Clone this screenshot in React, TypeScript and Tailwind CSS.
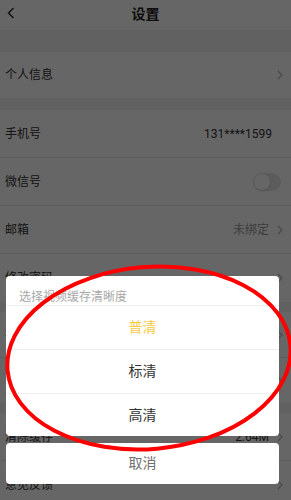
import { ReactNode } from "react";

const font = { fontFamily: '"Roboto", "Noto Sans CJK SC", sans-serif' };

function Chevron() {
    return (
        <svg width="6" height="10" viewBox="0 0 6 10" className="text-[#b5b5b5]">
            <path d="M1 1l4 4-4 4" fill="none" stroke="currentColor" strokeWidth="1.1" />
        </svg>
    );
}

function Row({ label, right, h = "h-[48px]", border = true }: { label: string; right?: ReactNode; h?: string; border?: boolean }) {
    return (
        <div className={`${h} bg-white flex items-center justify-between pl-[5px] pr-[8px] ${border ? "border-b border-[#ececec]" : ""}`}>
            <span className="text-[12px] text-[#333]">{label}</span>
            <div className="flex items-center gap-[8px]">{right}</div>
        </div>
    );
}

function App() {
    return (
        <div className="relative w-[291px] h-[500px] overflow-hidden bg-[#f2f3f5]" style={font}>
            {/* settings page */}
            <div className="h-[30px] bg-white flex items-center relative">
                <svg width="8" height="12" viewBox="0 0 8 12" className="absolute left-[7px] top-[7px]">
                    <path d="M6.5 1L1.5 6l5 5" fill="none" stroke="#222" strokeWidth="1.4" />
                </svg>
                <div className="flex-1 text-center text-[14px] font-bold text-[#222] -mt-[2px]">设置</div>
            </div>
            <div className="h-[22px]" />
            <Row label="个人信息" h="h-[46px]" border={false} right={<Chevron />} />
            <div className="h-[12px]" />
            <Row label="手机号" right={<span className="text-[12px] text-[#333] mr-[11px]">131****1599</span>} />
            <Row
                label="微信号"
                right={
                    <div className="w-[28px] h-[18px] rounded-full bg-[#e6e6e6] relative mr-[2px]">
                        <div className="absolute left-[1px] top-[1px] w-[16px] h-[16px] rounded-full bg-white shadow" />
                    </div>
                }
            />
            <Row label="邮箱" right={<><span className="text-[12px] text-[#999]">未绑定</span><Chevron /></>} />
            <Row label="修改密码" border={false} right={<Chevron />} />
            <div className="h-[10px]" />
            <Row label="视频缓存清晰度" h="h-[46px]" right={<><span className="text-[12px] text-[#999]">普清</span><Chevron /></>} />
            <Row label="自动播放" h="h-[45px]" border={false} right={<Chevron />} />
            <div className="h-[10px]" />
            <Row label="清除缓存" right={<><span className="text-[12px] text-[#333]">2.64M</span><Chevron /></>} />
            <Row label="意见反馈" border={false} right={<Chevron />} />

            {/* dim overlay */}
            <div className="absolute inset-0 bg-black/60" />

            {/* action sheet */}
            <div className="absolute left-[6px] top-[276px] w-[273px] flex flex-col gap-[7px]">
                <div className="bg-white rounded-[4px] overflow-hidden">
                    <div className="h-[29px] pt-[13px] pl-[13px] text-[12px] leading-[16px] text-[#a8a8a8]">
                        选择视频缓存清晰度
                    </div>
                    <div className="h-[44px] border-t border-[#efefef] flex items-center justify-center text-[14px] text-[#f6c944]">普清</div>
                    <div className="h-[44px] border-t border-[#efefef] flex items-center justify-center text-[14px] text-[#333]">标清</div>
                    <div className="h-[43px] border-t border-[#efefef] flex items-center justify-center text-[14px] text-[#333]">高清</div>
                </div>
                <div className="h-[41px] bg-white rounded-[4px] flex items-center justify-center text-[14px] text-[#6f6f6f]">取消</div>
            </div>

            {/* red annotation ellipse */}
            <svg className="absolute inset-0 pointer-events-none" width="291" height="500" viewBox="0 0 291 500">
                <ellipse cx="149" cy="358" rx="142" ry="91" fill="none" stroke="#f00" strokeWidth="4" transform="rotate(-5 149 358)" />
            </svg>
        </div>
    );
}

export default App;
